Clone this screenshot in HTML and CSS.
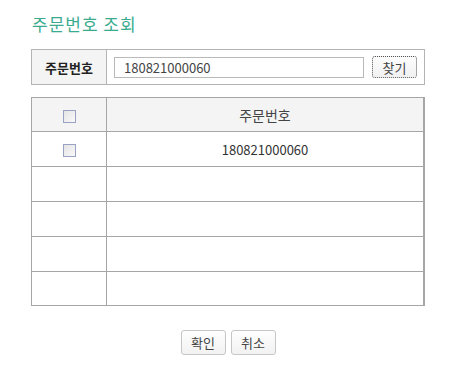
FILE: index.html
```html
<!DOCTYPE html>
<html>
    <head>
        <meta name="viewport" content="width=device-width, initial-scale=1.0">
        <link rel="stylesheet" href="styles.css">
    </head>
    <body>
        <div class="wrap">
            <h2 class="title">주문번호 조회</h2>

            <table class="search">
                <tr>
                    <th>주문번호</th>
                    <td>
                        <div class="search-row">
                            <input type="text" class="search-input" value="180821000060">
                            <button class="find-btn">찾기</button>
                        </div>
                    </td>
                </tr>
            </table>

            <table class="grid">
                <tr class="head">
                    <th class="col-check"><span class="chk"></span></th>
                    <th>주문번호</th>
                </tr>
                <tr>
                    <td class="col-check"><span class="chk"></span></td>
                    <td>180821000060</td>
                </tr>
                <tr><td class="col-check"></td><td></td></tr>
                <tr><td class="col-check"></td><td></td></tr>
                <tr><td class="col-check"></td><td></td></tr>
                <tr class="last"><td class="col-check"></td><td></td></tr>
            </table>

            <div class="actions">
                <button class="btn">확인</button>
                <button class="btn">취소</button>
            </div>
        </div>
    </body>
</html>
```

FILE: styles.css
```css
* {
    margin: 0;
    padding: 0;
    box-sizing: border-box;
}
body {
    background: #fff;
    font-family: "Noto Sans CJK KR", "Noto Sans", sans-serif;
    font-size: 13px;
    color: #333;
}
.wrap {
    width: 394px;
    margin-left: 31px;
    padding-top: 11px;
}
.title {
    font-size: 17px;
    font-weight: normal;
    line-height: 26px;
    letter-spacing: 1px;
    color: #3aab8f;
    margin-left: 1px;
    margin-bottom: 12px;
}
table {
    width: 394px;
    border-collapse: collapse;
}
.search th,
.search td {
    border: 1px solid #b4b4b4;
    height: 35px;
}
.search th {
    width: 75px;
    background: #f4f4f4;
    font-weight: bold;
    color: #222;
}
.search-row {
    display: flex;
    align-items: center;
    padding-left: 7px;
}
.search-input {
    width: 250px;
    height: 21px;
    border: 1px solid #b9b9b9;
    padding-left: 9px;
    font-family: inherit;
    font-size: 13px;
    color: #444;
    outline: 0;
}
.find-btn {
    width: 45px;
    height: 22px;
    margin-left: 8px;
    border: 1px dotted #555;
    border-radius: 3px;
    background: linear-gradient(#fdfdfd, #f1f1f1);
    font-family: inherit;
    font-size: 13px;
    color: #444;
}
.grid {
    margin-top: 12px;
    border-right: 2px solid #a6a6a6;
}
.grid th,
.grid td {
    border: 1px solid #a6a6a6;
    height: 35px;
    text-align: center;
    color: #333;
}
.grid .head th,
.grid .last td {
    height: 34px;
}
.grid th {
    background: #f4f4f4;
    font-weight: normal;
    font-size: 14px;
    color: #444;
}
.grid .col-check {
    width: 75px;
}
.chk {
    display: inline-block;
    width: 13px;
    height: 13px;
    border: 1px solid #9aa2c4;
    background: linear-gradient(135deg, #e4e4e4, #f9f9f9);
    vertical-align: middle;
    margin-left: 1px;
}
.actions {
    display: flex;
    justify-content: center;
    gap: 5px;
    margin-top: 24px;
}
.btn {
    width: 45px;
    height: 25px;
    border: 1px solid #c6c6c6;
    border-radius: 3px;
    background: linear-gradient(#fefefe, #f2f2f2);
    font-family: inherit;
    font-size: 13px;
    color: #444;
}
```
